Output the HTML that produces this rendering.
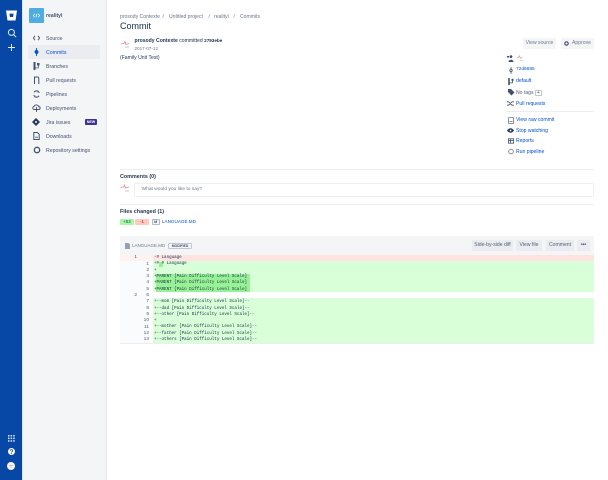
<!DOCTYPE html>
<html><head><meta charset="utf-8"><style>
html,body{margin:0;padding:0;background:#fff}
body{width:608px;height:480px;position:relative;overflow:hidden;font-family:"Liberation Sans",sans-serif;font-size:5.1px;color:#172B4D}
.a{position:absolute;white-space:pre;line-height:8px}
.b{position:absolute}
.n{left:46px;color:#42526E;font-size:5.2px}
.l{color:#0052CC}
.g{color:#6B778C}
.btn{position:absolute;background:#F4F5F7;border-radius:1px;color:#505F79;text-align:center;height:11px;line-height:11px;white-space:pre}
.c{position:absolute;font-family:"Liberation Mono",monospace;font-size:4.2px;line-height:6.3px;white-space:pre;color:#172B4D}
.ln{position:absolute;font-size:4.8px;color:#505F79;width:8px;text-align:right;line-height:6.3px}
svg{position:absolute;overflow:visible}
</style></head><body>
<div class="b" style="left:0;top:0;width:22px;height:480px;background:#0747A6"></div>
<div class="b" style="left:22px;top:0;width:1px;height:480px;background:#dfe5f0"></div>
<div class="b" style="left:23px;top:0;width:83px;height:480px;background:#F4F5F7"></div>
<div class="b" style="left:105.5px;top:0;width:.5px;height:480px;background:#e3e5e9"></div>
<!-- global icons -->
<svg style="left:6px;top:10px" width="11" height="11" viewBox="0 0 11 11"><path d="M0 0.5H11L9.5 10.5H1.5Z" fill="#fff"/><path d="M3.4 3.6H7.6L7.1 7H3.9Z" fill="#0747A6"/></svg>
<svg style="left:7px;top:28px" width="10" height="10" viewBox="0 0 10 10" fill="none" stroke="#DEEBFF" stroke-width="1"><circle cx="4.4" cy="4.4" r="3"/><path d="M6.6 6.6L9.2 9.2"/></svg>
<svg style="left:7px;top:43px" width="9" height="9" viewBox="0 0 9 9" fill="none" stroke="#DEEBFF" stroke-width="1"><path d="M4.5 1V8M1 4.5H8"/></svg>
<svg style="left:8px;top:435px" width="7" height="7" viewBox="0 0 7 7" fill="#DEEBFF"><rect x="0" y="0" width="1.5" height="1.5"/><rect x="2.6" y="0" width="1.5" height="1.5"/><rect x="5.2" y="0" width="1.5" height="1.5"/><rect x="0" y="2.6" width="1.5" height="1.5"/><rect x="2.6" y="2.6" width="1.5" height="1.5"/><rect x="5.2" y="2.6" width="1.5" height="1.5"/><rect x="0" y="5.2" width="1.5" height="1.5"/><rect x="2.6" y="5.2" width="1.5" height="1.5"/><rect x="5.2" y="5.2" width="1.5" height="1.5"/></svg>
<svg style="left:8px;top:448px" width="7" height="7" viewBox="0 0 7 7"><circle cx="3.5" cy="3.5" r="3.5" fill="#fff"/><path d="M2.3 2.8C2.3 1.2 4.8 1.3 4.8 2.7C4.8 3.6 3.5 3.6 3.5 4.5" fill="none" stroke="#0747A6" stroke-width=".8"/><circle cx="3.5" cy="5.6" r=".5" fill="#0747A6"/></svg>
<svg style="left:7px;top:462px" width="8" height="8" viewBox="0 0 8 8"><circle cx="4" cy="4" r="4" fill="#f7f4f3"/><path d="M2 3.5H6" stroke="#d9a9a0" stroke-width=".8"/><path d="M2.5 5.2H5" stroke="#c9c9d2" stroke-width=".7"/></svg>
<!-- repo -->
<div class="b" style="left:29px;top:8px;width:15px;height:15px;background:#4FADE0;border-radius:1px"></div>
<svg style="left:33px;top:13px" width="7" height="5" viewBox="0 0 7 5" fill="none" stroke="#fff" stroke-width=".7"><path d="M1.8 .8L.3 2.5L1.8 4.2M5.2 .8L6.7 2.5L5.2 4.2M4 .6L3 4.4"/></svg>
<div class="a" style="left:46px;top:11.5px;font-weight:bold;color:#42526E">realityl</div>
<div class="b" style="left:28px;top:45px;width:72px;height:14px;background:#EBECF0;border-radius:1px"></div>
<div class="a n" style="top:34.5px">Source</div>
<div class="a n" style="top:48.5px;color:#0052CC">Commits</div>
<div class="a n" style="top:62.5px">Branches</div>
<div class="a n" style="top:76.5px">Pull requests</div>
<div class="a n" style="top:90.5px">Pipelines</div>
<div class="a n" style="top:104.5px">Deployments</div>
<div class="a n" style="top:118.5px">Jira issues</div>
<div class="a n" style="top:132.5px">Downloads</div>
<div class="a n" style="top:146.5px">Repository settings</div>
<div class="b" style="left:85px;top:119px;width:12px;height:6px;background:#403294;border-radius:1px;color:#fff;font-size:3.6px;line-height:6px;text-align:center;font-weight:bold">NEW</div>
<!-- nav icons -->
<svg style="left:33px;top:35px" width="7" height="6" viewBox="0 0 7 6" fill="none" stroke="#42526E" stroke-width=".9"><path d="M2 .8L.4 3L2 5.2M5 .8L6.6 3L5 5.2"/></svg>
<svg style="left:34px;top:48px" width="5" height="8" viewBox="0 0 5 8" fill="none" stroke="#0052CC" stroke-width=".9"><path d="M2.5 0V8"/><circle cx="2.5" cy="4" r="1.5" fill="#0052CC"/></svg>
<svg style="left:33px;top:62px" width="7" height="8" viewBox="0 0 7 8" fill="#42526E"><rect x=".5" y="0" width="2" height="8"/><rect x="4" y="1" width="2.5" height="2.5"/><path d="M2 5.5H5V3H5.7V6.2H2Z"/></svg>
<svg style="left:33px;top:76px" width="7" height="8" viewBox="0 0 7 8" fill="none" stroke="#42526E" stroke-width="1"><path d="M1.5 .5V8M1.5 1H4.5C5.3 1 5.8 1.6 5.8 2.4V8"/></svg>
<svg style="left:33px;top:90px" width="7" height="8" viewBox="0 0 7 8" fill="none" stroke="#42526E" stroke-width="1"><path d="M5.8 2A2.9 2.9 0 0 0 1 2.3M1.2 6A2.9 2.9 0 0 0 6 5.7"/><path d="M5 .3V2.5H7M2 7.7V5.5H0" stroke-width=".6"/></svg>
<svg style="left:32px;top:104px" width="9" height="8" viewBox="0 0 9 8" fill="none" stroke="#42526E" stroke-width=".9"><path d="M2.5 5.5C.3 5.5 .3 2.5 2.2 2.4C2.8 .5 6 .5 6.5 2.5C8.7 2.5 8.7 5.5 6.5 5.5H2.5Z"/><path d="M4.5 3V8"/></svg>
<svg style="left:32px;top:118px" width="8" height="8" viewBox="0 0 8 8" fill="#253858"><path d="M4 0L8 4L4 8L0 4Z"/><circle cx="4" cy="4" r="1" fill="#F4F5F7"/></svg>
<svg style="left:33px;top:132px" width="7" height="8" viewBox="0 0 7 8" fill="none" stroke="#42526E" stroke-width="1"><path d="M.8 .5H4.4L6.2 2.3V7.5H.8Z"/><path d="M2 5.2H5" stroke-width=".8"/></svg>
<svg style="left:32.5px;top:146px" width="8" height="8" viewBox="0 0 8 8" fill="none" stroke="#42526E" stroke-width="1.3"><circle cx="4" cy="4" r="2.7"/></svg>
<!-- header -->
<div class="a g" style="left:120px;top:12.5px">prosody Contexte</div>
<div class="a g" style="left:162.5px;top:12.5px">/</div>
<div class="a g" style="left:169px;top:12.5px">Untitled project</div>
<div class="a g" style="left:208.5px;top:12.5px">/</div>
<div class="a g" style="left:214px;top:12.5px">realityl</div>
<div class="a g" style="left:233.5px;top:12.5px">/</div>
<div class="a g" style="left:240px;top:12.5px">Commits</div>
<div class="a" style="left:120px;top:21px;font-size:9px;line-height:11px;color:#172B4D">Commit</div>
<svg style="left:120px;top:39px" width="11" height="11" viewBox="0 0 11 11" fill="none"><path d="M1 5L4 4.5L5 2.5L6 5.5L9 4.5" stroke="#d98a8a" stroke-width=".8"/><path d="M5 8H9" stroke="#bbbcc6" stroke-width=".8"/></svg>
<div class="a" style="left:134.5px;top:37px"><b style="color:#253858">prosody Contexte</b> committed <b style="font-size:4.6px">2793ebe</b></div>
<div class="a g" style="left:134.5px;top:44.5px;font-size:4.6px">2017-07-12</div>
<div class="a" style="left:120px;top:54px;color:#253858">(Family Unit Test)</div>
<!-- right -->
<div class="btn" style="left:523px;top:38px;width:33px;color:#6B778C">View source</div>
<div class="btn" style="left:561px;top:38px;width:33px;color:#6B778C;text-align:left;text-indent:11px">Approve</div>
<svg style="left:563.5px;top:41px" width="5" height="5" viewBox="0 0 5 5"><circle cx="2.5" cy="2.5" r="1.7" fill="none" stroke="#42526E" stroke-width="1.2"/></svg>
<svg style="left:507px;top:55px" width="7" height="7" viewBox="0 0 7 7" fill="#42526E"><circle cx="4" cy="1.6" r="1.4"/><path d="M1.5 7C1.5 4 6.5 4 6.5 7Z"/><rect x="0" y="1" width="2" height="1.5"/></svg>
<svg style="left:516px;top:55px" width="8" height="7" viewBox="0 0 8 7" fill="none"><path d="M.5 3L2.5 2.5L3.5 .8L4.5 3.2L6.5 2.5" stroke="#dc9b9b" stroke-width=".7"/><path d="M3.5 5.5H7" stroke="#c6c7d0" stroke-width=".7"/></svg>
<svg style="left:508.5px;top:66.5px" width="4" height="7" viewBox="0 0 4 7" fill="none" stroke="#42526E" stroke-width=".8"><path d="M2 0V7"/><circle cx="2" cy="3.5" r="1.2" fill="#fff"/></svg>
<div class="a l" style="left:516px;top:66px;font-size:4.8px">72d6685</div>
<svg style="left:507.5px;top:77.5px" width="6" height="7" viewBox="0 0 6 7" fill="#42526E"><rect x=".2" y="0" width="1.6" height="7"/><rect x="3.5" y=".8" width="2" height="2"/><path d="M1.5 4.5H4V2.5H4.8V5.3H1.5Z"/></svg>
<div class="a l" style="left:516px;top:77px">default</div>
<svg style="left:507.5px;top:89px" width="7" height="7" viewBox="0 0 7 7" fill="#42526E"><path d="M0 0H3L6.5 3.5L3.5 6.5L0 3Z"/></svg>
<div class="a" style="left:516px;top:88.5px;color:#505F79">No tags</div>
<div class="b" style="left:535px;top:89.5px;width:6.5px;height:6.5px;border:.5px solid #C1C7D0;box-sizing:border-box;border-radius:1px;color:#42526E;text-align:center;font-size:5px;line-height:5.5px">+</div>
<svg style="left:507px;top:101px" width="7" height="5" viewBox="0 0 7 5" fill="none" stroke="#42526E" stroke-width=".8"><path d="M0 .8H1.5L5 4.2H7M0 4.2H1.5L5 .8H7"/></svg>
<div class="a l" style="left:516px;top:99.5px">Pull requests</div>
<div class="b" style="left:506px;top:111px;width:88px;height:1px;background:#ECEDF0"></div>
<svg style="left:508px;top:116.5px" width="6" height="7" viewBox="0 0 6 7" fill="none" stroke="#6B778C" stroke-width=".8"><rect x=".5" y=".5" width="5" height="6" rx=".5"/><path d="M1.5 4.5H4.5"/></svg>
<div class="a l" style="left:516px;top:116px">View raw commit</div>
<svg style="left:507px;top:128px" width="7" height="5" viewBox="0 0 7 5"><path d="M0 2.5C2 -.5 5 -.5 7 2.5C5 5.5 2 5.5 0 2.5Z" fill="#253858"/><circle cx="3.5" cy="2.5" r=".9" fill="#fff"/></svg>
<div class="a l" style="left:516px;top:126.5px">Stop watching</div>
<svg style="left:507.5px;top:138px" width="6" height="6" viewBox="0 0 6 6" fill="none" stroke="#42526E" stroke-width=".8"><rect x=".4" y=".8" width="5.2" height="4.4"/><path d="M.4 2.5H5.6M2.5 .8V5.2"/></svg>
<div class="a l" style="left:516px;top:137px">Reports</div>
<svg style="left:507.5px;top:148px" width="6" height="7" viewBox="0 0 6 7" fill="none" stroke="#6B778C" stroke-width=".8"><circle cx="3" cy="3.5" r="2.3"/></svg>
<div class="a l" style="left:516px;top:147.5px">Run pipeline</div>
<!-- comments -->
<div class="b" style="left:120px;top:169px;width:474px;height:1px;background:#ECEDF0"></div>
<div class="a" style="left:120px;top:172.5px;font-weight:bold;font-size:5.4px;color:#253858">Comments (0)</div>
<svg style="left:120px;top:184px" width="11" height="10" viewBox="0 0 11 10" fill="none"><path d="M.5 3.5L3.5 3L4.5 1L5.5 4L9 3" stroke="#d98a8a" stroke-width=".8"/><path d="M5 7H9" stroke="#bbbcc6" stroke-width=".8"/></svg>
<div class="b" style="left:134px;top:183px;width:460px;height:14px;border:.5px solid #EEF0F2;box-sizing:border-box;border-radius:1px;background:#fff"></div>
<div class="a g" style="left:141.5px;top:186px;font-size:4.9px">What would you like to say?</div>
<div class="b" style="left:120px;top:204px;width:474px;height:1px;background:#ECEDF0"></div>
<div class="a" style="left:120px;top:207.5px;font-weight:bold;font-size:5.4px;color:#253858">Files changed (1)</div>
<div class="b" style="left:120px;top:219px;width:14px;height:6px;background:#ABF5A8;border-radius:1px;color:#006644;font-size:4.6px;line-height:6px;text-align:center">+52</div>
<div class="b" style="left:135px;top:219px;width:14px;height:6px;background:#FFC9C2;border-radius:1px;color:#BF2600;font-size:4.6px;line-height:6px;text-align:center">-1</div>
<div class="b" style="left:152px;top:219px;width:7.5px;height:6px;background:#F4F5F7;border:.5px solid #B3BAC5;box-sizing:border-box;border-radius:1px;color:#42526E;font-size:3.8px;line-height:5px;text-align:center;font-weight:bold">M</div>
<div class="a l" style="left:162px;top:218px;font-size:4.6px">LANGUAGE.MD</div>
<!-- file -->
<div class="b" style="left:120px;top:236px;width:474px;height:19px;background:#F4F5F7"></div>
<svg style="left:124.5px;top:242.5px" width="5" height="6" viewBox="0 0 5 6" fill="#97A0AF"><path d="M0 0H3.5L5 1.5V6H0Z"/></svg>
<div class="a g" style="left:132px;top:241.5px;font-size:4.5px">LANGUAGE.MD</div>
<div class="b" style="left:168px;top:242.5px;width:24px;height:6px;border:.5px solid #C1C7D0;box-sizing:border-box;border-radius:1px;color:#42526E;font-size:3.4px;line-height:5px;text-align:center;font-weight:bold;white-space:pre">MODIFIED</div>
<div class="btn" style="left:472px;top:240px;width:41px;background:#EBECF0;color:#505F79">Side-by-side diff</div>
<div class="btn" style="left:516px;top:240px;width:26px;background:#EBECF0;color:#505F79">View file</div>
<div class="btn" style="left:546px;top:240px;width:28px;background:#EBECF0;color:#505F79">Comment</div>
<div class="btn" style="left:577px;top:240px;width:13px;background:#EBECF0;font-weight:bold;color:#42526E;line-height:10px">•••</div>
<div class="b" style="left:120px;top:255px;width:30px;height:88px;background:#FAFBFC"></div>
<div class="b" style="left:153px;top:255px;width:441px;height:6px;background:#FFE3E0"></div>
<div class="b" style="left:120px;top:255px;width:33px;height:6px;background:#FFF2F0"></div>
<div class="b" style="left:153px;top:261px;width:441px;height:31px;background:#D8FFD8"></div>
<div class="b" style="left:153px;top:298.3px;width:441px;height:44.7px;background:#D8FFD8"></div>
<div class="b" style="left:159px;top:261.5px;width:3.5px;height:5px;background:#97F295"></div>
<div class="b" style="left:156px;top:273.7px;width:93.5px;height:18.3px;background:#97F295"></div>
<div class="b" style="left:120px;top:343px;width:474px;height:.5px;background:#ECEDF0"></div>
<div class="ln" style="left:129px;top:255.2px">1</div><div class="ln" style="left:141px;top:261.5px">1</div><div class="ln" style="left:141px;top:267.8px">2</div><div class="ln" style="left:141px;top:274.1px">3</div><div class="ln" style="left:141px;top:280.4px">4</div><div class="ln" style="left:141px;top:286.7px">5</div><div class="ln" style="left:129px;top:293px">2</div><div class="ln" style="left:141px;top:293px">6</div><div class="ln" style="left:141px;top:299.3px">7</div><div class="ln" style="left:141px;top:305.6px">8</div><div class="ln" style="left:141px;top:311.9px">9</div><div class="ln" style="left:141px;top:318.2px">10</div><div class="ln" style="left:141px;top:324.5px">11</div><div class="ln" style="left:141px;top:330.8px">12</div><div class="ln" style="left:141px;top:337.1px">13</div>
<div class="c" style="left:154px;top:255.2px">-# Language
+# # Language
+
+PARENT [Pain Difficulty Level Scale]
+PARENT [Pain Difficulty Level Scale]
+PARENT [Pain Difficulty Level Scale]

+--mom [Pain Difficulty Level Scale]--
+--dad [Pain Difficulty Level Scale]--
+--other [Pain Difficulty Level Scale]--
+
+--mother [Pain Difficulty Level Scale]--
+--father [Pain Difficulty Level Scale]--
+--others [Pain Difficulty Level Scale]--</div>
</body></html>
